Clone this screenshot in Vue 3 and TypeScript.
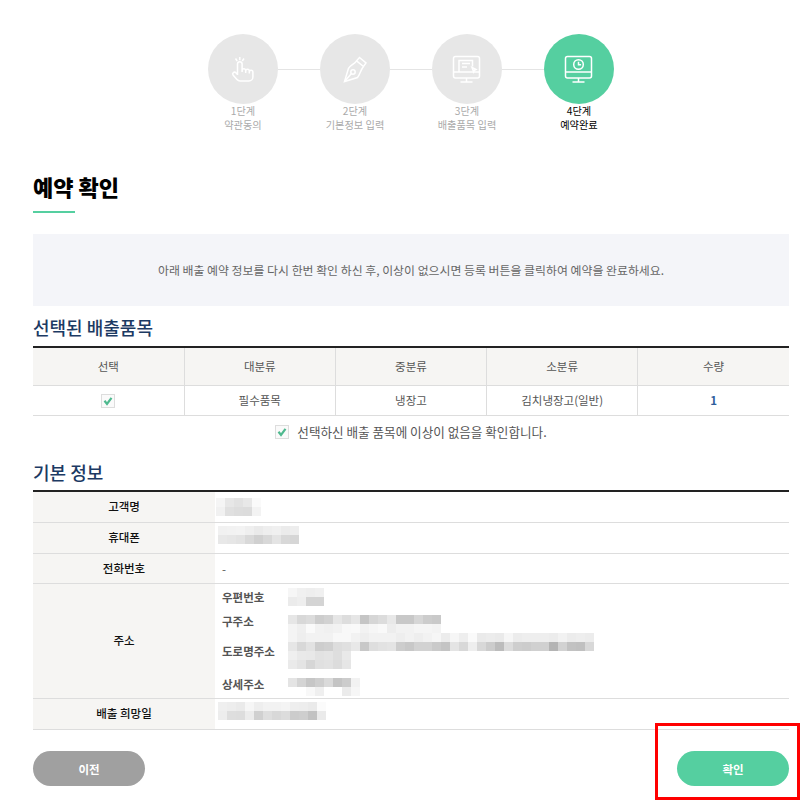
<script setup lang="ts">
const steps = [
  { no: '1단계', name: '약관동의' },
  { no: '2단계', name: '기본정보 입력' },
  { no: '3단계', name: '배출품목 입력' },
  { no: '4단계', name: '예약완료' },
]

const columns = ['선택', '대분류', '중분류', '소분류', '수량']

// masked personal data, grey level per 9px cell
const masks = {
  name: 'f5 e7 e2 e8 fa f1 e0 dd dc f3',
  phone: 'f1 f2 f3 ef ea ee f0 eb ed e8 e6 e3 d9 d0 d8 e4 d8 d6',
  zip: 'f6 f0 ee f0 eb ee d4 d4',
  oldAddr:
    'e6 d8 dc cd d2 e6 dd e6 c5 d6 dc e8 c8 c8 d6 cc c9 f4 ef fa f2 f0 f2 f8 f9 f2 f6 f9 ed f2 f2 f5 f5 f3',
  road:
    'f4 ee f2 f2 f2 f8 f8 f2 ee f2 f2 f2 ee f2 ee f2 f6 ec f6 ee fa ea ec ea f6 ec ee ee ee ec f2 ec ee ec ' +
    'e6 d8 e2 cd d0 dd e0 e8 c8 de e2 e4 cd c8 d2 d2 ca c4 e4 d8 ee d8 cc bc dc ce cc d0 d0 b4 d2 c2 c0 d8',
  roadEnd: 'ef e9 e8 e2 e4 de e9 ea e4 d6 e0 e2 dc e6',
  detail: 'e4 d4 c6 ce da c4 cc f2 ff ff f8 ef ff ff eb f6',
  date: 'ef ed ea f6 ee f2 f2 f4 ee ed ea fb ed de dd ec d0 de d8 dc cc ce c2 ea',
}

const cells = (data: string) => data.split(' ').map((v) => `#${v}${v}${v}`)
const width = (cols: number) => ({ width: `${cols * 9}px` })
</script>

<template>
  <div class="page">
    <div class="steps">
      <template v-for="(step, i) in steps" :key="step.no">
        <div v-if="i > 0" class="step-line"></div>
        <div class="step" :class="{ 'step--on': i === 3 }">
          <div class="step-circle">
            <svg v-if="i === 0" viewBox="0 0 70 70" class="step-icon">
              <path d="M29.500 41V30a2.300 2.300 0 0 1 4.600 0v8M34.100 36.500a1.800 1.800 0 0 1 3.600 0v2.500M37.700 37a1.800 1.800 0 0 1 3.600 0v2.500M41.300 38a1.800 1.800 0 0 1 3.600 0v5a4 4 0 0 1-4 4H32a4 4 0 0 1-3-1.400l-3.800-4.400a1.800 1.800 0 0 1 2.700-2.400l1.600 1.700" />
              <path d="M31.800 23v3.200M27.500 24.500l1.700 2.500M36 24.500l-1.700 2.500" />
            </svg>
            <svg v-else-if="i === 1" viewBox="0 0 70 70" class="step-icon">
              <path d="M39.500 23.500l6.500 5.500-2.500 3.500-7-5.700zM36.500 26.800c-2 3.200-6 4.500-8 7.500L24.500 47.500l13-4c2.500-3 2.800-7.200 6-11" />
              <circle cx="33" cy="38" r="2.200" />
              <path d="M24.500 47.500l7-8" />
            </svg>
            <svg v-else-if="i === 2" viewBox="0 0 70 70" class="step-icon">
              <rect x="21.500" y="22.500" width="26" height="21.500" rx="2" />
              <path d="M21.500 38h26M34.500 44v4M28.500 48h12" />
              <path d="M27 38V26.500h13.500v6M30 29.500h8M30 33h5" />
              <path d="M40 33.500l4 2-1.600.7-.7 1.800z" />
            </svg>
            <svg v-else viewBox="0 0 70 70" class="step-icon">
              <rect x="21.500" y="22.500" width="26" height="21.500" rx="2" />
              <path d="M21.500 38h26M34.500 44v4M28.500 48h12" />
              <circle cx="34.500" cy="30.500" r="4.800" />
              <path d="M34.500 27.800v3h2.600" />
            </svg>
          </div>
          <div class="step-text">{{ step.no }}<br />{{ step.name }}</div>
        </div>
      </template>
    </div>

    <h1 class="title">예약 확인</h1>

    <p class="notice">아래 배출 예약 정보를 다시 한번 확인 하신 후, 이상이 없으시면 등록 버튼을 클릭하여 예약을 완료하세요.</p>

    <h2 class="sub-title">선택된 배출품목</h2>
    <table class="grid">
      <thead>
        <tr>
          <th v-for="col in columns" :key="col">{{ col }}</th>
        </tr>
      </thead>
      <tbody>
        <tr>
          <td>
            <span class="check">
              <svg viewBox="0 0 12 12"><path d="M2.500 5.800l2.500 3.200L9.500 2.800" /></svg>
            </span>
          </td>
          <td>필수품목</td>
          <td>냉장고</td>
          <td>김치냉장고(일반)</td>
          <td class="qty">1</td>
        </tr>
      </tbody>
    </table>
    <div class="agree">
      <span class="check">
        <svg viewBox="0 0 12 12"><path d="M2.500 5.800l2.500 3.200L9.500 2.800" /></svg>
      </span>
      <span>선택하신 배출 품목에 이상이 없음을 확인합니다.</span>
    </div>

    <h2 class="sub-title sub-title--info">기본 정보</h2>
    <table class="info">
      <tbody>
        <tr class="row-name">
          <th>고객명</th>
          <td class="cell-name">
            <span class="mosaic" :style="width(5)"><i v-for="(c, n) in cells(masks.name)" :key="n" :style="{ background: c }"></i></span>
          </td>
        </tr>
        <tr class="row-phone">
          <th>휴대폰</th>
          <td class="cell-lift">
            <span class="mosaic" :style="width(9)"><i v-for="(c, n) in cells(masks.phone)" :key="n" :style="{ background: c }"></i></span>
          </td>
        </tr>
        <tr class="row-tel">
          <th>전화번호</th>
          <td class="cell-tel">-</td>
        </tr>
        <tr>
          <th>주소</th>
          <td class="cell-addr">
            <div class="addr addr--zip">
              <span class="addr-label">우편번호</span>
              <span class="mosaic" :style="width(4)"><i v-for="(c, n) in cells(masks.zip)" :key="n" :style="{ background: c }"></i></span>
            </div>
            <div class="addr">
              <span class="addr-label addr-label--up">구주소</span>
              <span class="mosaic" :style="width(17)"><i v-for="(c, n) in cells(masks.oldAddr)" :key="n" :style="{ background: c }"></i></span>
            </div>
            <div class="addr">
              <span class="addr-label">도로명주소</span>
              <div>
                <span class="mosaic" :style="width(34)"><i v-for="(c, n) in cells(masks.road)" :key="n" :style="{ background: c }"></i></span>
                <span class="mosaic" :style="width(7)"><i v-for="(c, n) in cells(masks.roadEnd)" :key="n" :style="{ background: c }"></i></span>
              </div>
            </div>
            <div class="addr addr--detail">
              <span class="addr-label addr-label--up">상세주소</span>
              <span class="mosaic" :style="width(8)"><i v-for="(c, n) in cells(masks.detail)" :key="n" :style="{ background: c }"></i></span>
            </div>
          </td>
        </tr>
        <tr class="row-date">
          <th>배출 희망일</th>
          <td class="cell-lift">
            <span class="mosaic" :style="width(12)"><i v-for="(c, n) in cells(masks.date)" :key="n" :style="{ background: c }"></i></span>
          </td>
        </tr>
      </tbody>
    </table>

    <div class="actions">
      <button type="button" class="btn btn--prev">이전</button>
      <button type="button" class="btn btn--ok">확인</button>
    </div>
    <div class="highlight"></div>
  </div>
</template>

<style>
html,
body {
  margin: 0;
  background: #fff;
}
</style>

<style scoped>
.page {
  position: relative;
  width: 809px;
  height: 802px;
  box-sizing: border-box;
  padding: 34px 20px 0 33px;
  overflow: hidden;
  font-family: "Noto Sans CJK KR", "Noto Sans", sans-serif;
  color: #555;
}

.steps {
  display: flex;
  justify-content: center;
}

.step {
  width: 70px;
  flex: none;
}

.step-line {
  width: 42px;
  height: 1px;
  margin-top: 35px;
  background: #e4e4e4;
}

.step-circle {
  width: 70px;
  height: 70px;
  border-radius: 50%;
  background: #e7e7e7;
}

.step--on .step-circle {
  background: #55cfa0;
}

.step-icon {
  display: block;
  width: 70px;
  height: 70px;
  fill: none;
  stroke: #fff;
  stroke-width: 1.500;
}

.step-text {
  margin: 0 -20px;
  font-size: 10.200px;
  line-height: 14px;
  text-align: center;
  color: #aaa;
  white-space: nowrap;
}

.step--on .step-text {
  color: #000;
}

.title {
  margin: 39px 0 0;
  height: 43px;
  font-size: 22px;
  line-height: 30px;
  font-weight: 900;
  color: #000;
}

.title::after {
  content: '';
  display: block;
  width: 42px;
  height: 2px;
  margin-top: 10px;
  background: #55cfa0;
}

.notice {
  margin: 20px 0 0;
  height: 72px;
  font-size: 11.900px;
  line-height: 72px;
  text-align: center;
  color: #666;
  background: #f4f5f9;
}

.sub-title {
  margin: 0;
  padding-top: 7px;
  height: 33px;
  font-size: 18px;
  line-height: 28px;
  font-weight: 500;
  color: #1c3a63;
}

.sub-title--info {
  padding-top: 11px;
  height: 32px;
}

.grid,
.info {
  width: 756px;
  border-collapse: collapse;
  table-layout: fixed;
  border-top: 2px solid #222;
  font-size: 11.500px;
}

.grid th,
.grid td {
  text-align: center;
  font-weight: 400;
  border-bottom: 1px solid #ddd;
  border-left: 1px solid #ddd;
  padding: 0 0 2px;
}

.grid th:first-child,
.grid td:first-child {
  border-left: 0;
}

.grid th {
  height: 35px;
  background: #f6f5f3;
}

.grid td {
  height: 27px;
}

.grid .qty {
  color: #2f5d9b;
  font-weight: 700;
}

.check {
  display: inline-block;
  width: 14px;
  height: 14px;
  box-sizing: border-box;
  border: 1px solid #ddd;
  vertical-align: middle;
  background: #fafafa;
}

.check svg {
  display: block;
  width: 12px;
  height: 12px;
  fill: none;
  stroke: #4fb98f;
  stroke-width: 2.200;
}

.agree {
  display: flex;
  align-items: center;
  justify-content: center;
  gap: 8px;
  height: 31px;
  font-size: 12.600px;
}

.info th {
  width: 182px;
  padding: 0 0 2px;
  font-weight: 500;
  color: #111;
  background: #f6f5f3;
  border-bottom: 1px solid #ddd;
}

.info td {
  padding: 0 0 0 3px;
  border-bottom: 1px solid #ddd;
}

.info .cell-name {
  padding-left: 1px;
}

.info .cell-tel {
  padding-left: 7px;
}

.row-name th,
.row-phone th,
.row-date th {
  height: 28px;
}

.row-name td {
  height: 30px;
}

.row-tel th {
  height: 27px;
}

.row-tel td {
  height: 29px;
}

.info .cell-lift {
  height: 24px;
  padding-bottom: 6px;
}

.mosaic {
  display: flex;
  flex-wrap: wrap;
}

.mosaic i {
  display: block;
  width: 9px;
  height: 9px;
}

.info .cell-addr {
  padding: 4px 0 2px 7px;
}

.addr {
  display: flex;
  align-items: center;
  font-weight: 700;
  color: #555;
}

.addr--zip,
.addr--detail {
  margin: 9px 0;
}

.addr--zip {
  margin-top: 0;
}

.addr--detail {
  margin-bottom: 0;
}

.addr-label {
  width: 66px;
  flex: none;
  line-height: 12px;
}

.addr-label--up {
  margin-bottom: 6px;
}

.actions {
  display: flex;
  justify-content: space-between;
  margin-top: 21px;
}

.btn {
  width: 112px;
  height: 35px;
  border: 0;
  border-radius: 18px;
  font-family: inherit;
  font-size: 11.500px;
  font-weight: 700;
  color: #fff;
  cursor: pointer;
}

.btn--prev {
  background: #a0a0a0;
}

.btn--ok {
  background: #55cfa0;
}

.highlight {
  position: absolute;
  left: 655px;
  top: 723px;
  width: 145px;
  height: 77px;
  box-sizing: border-box;
  border: 3px solid #f00;
  pointer-events: none;
}
</style>
